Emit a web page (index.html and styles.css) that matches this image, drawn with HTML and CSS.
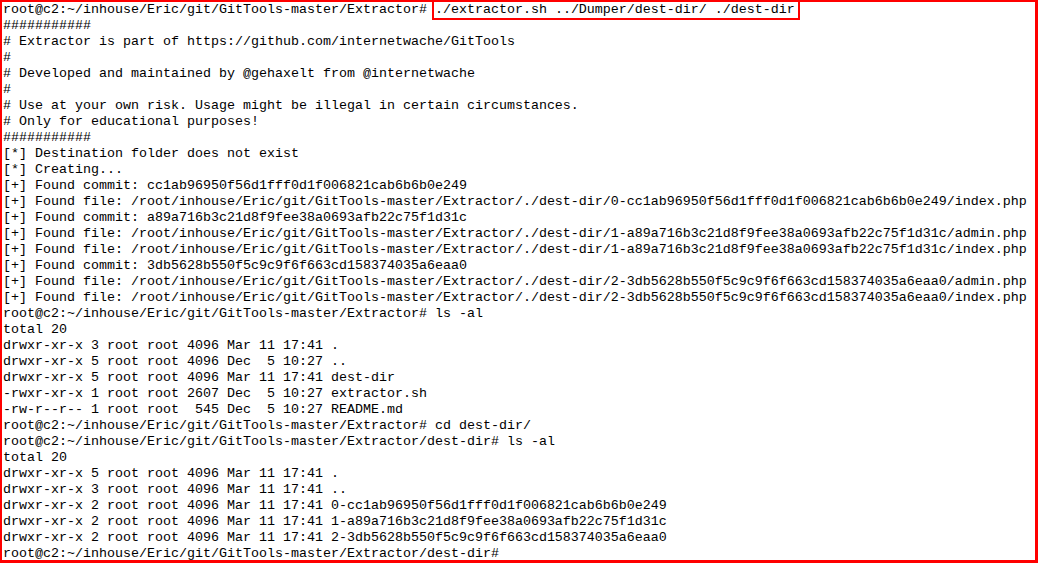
FILE: index.html
```html
<!DOCTYPE html>
<html lang="en">

<head>
    <meta charset="UTF-8">
    <title>GitTools Extractor</title>
    <link rel="stylesheet" href="styles.css">
</head>

<body>
    <div class="screen">
<pre class="terminal">root@c2:~/inhouse/Eric/git/GitTools-master/Extractor# <span class="highlight">./extractor.sh ../Dumper/dest-dir/ ./dest-dir</span>
###########
# Extractor is part of https://github.com/internetwache/GitTools
#
# Developed and maintained by @gehaxelt from @internetwache
#
# Use at your own risk. Usage might be illegal in certain circumstances.
# Only for educational purposes!
###########
[*] Destination folder does not exist
[*] Creating...
[+] Found commit: cc1ab96950f56d1fff0d1f006821cab6b6b0e249
[+] Found file: /root/inhouse/Eric/git/GitTools-master/Extractor/./dest-dir/0-cc1ab96950f56d1fff0d1f006821cab6b6b0e249/index.php
[+] Found commit: a89a716b3c21d8f9fee38a0693afb22c75f1d31c
[+] Found file: /root/inhouse/Eric/git/GitTools-master/Extractor/./dest-dir/1-a89a716b3c21d8f9fee38a0693afb22c75f1d31c/admin.php
[+] Found file: /root/inhouse/Eric/git/GitTools-master/Extractor/./dest-dir/1-a89a716b3c21d8f9fee38a0693afb22c75f1d31c/index.php
[+] Found commit: 3db5628b550f5c9c9f6f663cd158374035a6eaa0
[+] Found file: /root/inhouse/Eric/git/GitTools-master/Extractor/./dest-dir/2-3db5628b550f5c9c9f6f663cd158374035a6eaa0/admin.php
[+] Found file: /root/inhouse/Eric/git/GitTools-master/Extractor/./dest-dir/2-3db5628b550f5c9c9f6f663cd158374035a6eaa0/index.php
root@c2:~/inhouse/Eric/git/GitTools-master/Extractor# ls -al
total 20
drwxr-xr-x 3 root root 4096 Mar 11 17:41 .
drwxr-xr-x 5 root root 4096 Dec  5 10:27 ..
drwxr-xr-x 5 root root 4096 Mar 11 17:41 dest-dir
-rwxr-xr-x 1 root root 2607 Dec  5 10:27 extractor.sh
-rw-r--r-- 1 root root  545 Dec  5 10:27 README.md
root@c2:~/inhouse/Eric/git/GitTools-master/Extractor# cd dest-dir/
root@c2:~/inhouse/Eric/git/GitTools-master/Extractor/dest-dir# ls -al
total 20
drwxr-xr-x 5 root root 4096 Mar 11 17:41 .
drwxr-xr-x 3 root root 4096 Mar 11 17:41 ..
drwxr-xr-x 2 root root 4096 Mar 11 17:41 0-cc1ab96950f56d1fff0d1f006821cab6b6b0e249
drwxr-xr-x 2 root root 4096 Mar 11 17:41 1-a89a716b3c21d8f9fee38a0693afb22c75f1d31c
drwxr-xr-x 2 root root 4096 Mar 11 17:41 2-3db5628b550f5c9c9f6f663cd158374035a6eaa0
root@c2:~/inhouse/Eric/git/GitTools-master/Extractor/dest-dir#</pre>
    </div>
</body>

</html>
```

FILE: styles.css
```css
html,
body {
    margin: 0;
    padding: 0;
    background: #fff;
}

.screen {
    width: 1038px;
    height: 563px;
    box-sizing: border-box;
    border: 2px solid #ff0000;
    border-right-width: 3px;
    border-bottom-width: 3px;
    overflow: hidden;
}

.terminal {
    margin: 0;
    padding: 0 0 0 1px;
    font-family: "Liberation Mono", "Courier New", monospace;
    font-size: 13.333px;
    line-height: 16px;
    color: #000;
}

.highlight {
    border: 2px solid #ff0000;
    margin: 0 -5px 0 -3px;
    padding: 1px 3px 1px 1px;
}
```
